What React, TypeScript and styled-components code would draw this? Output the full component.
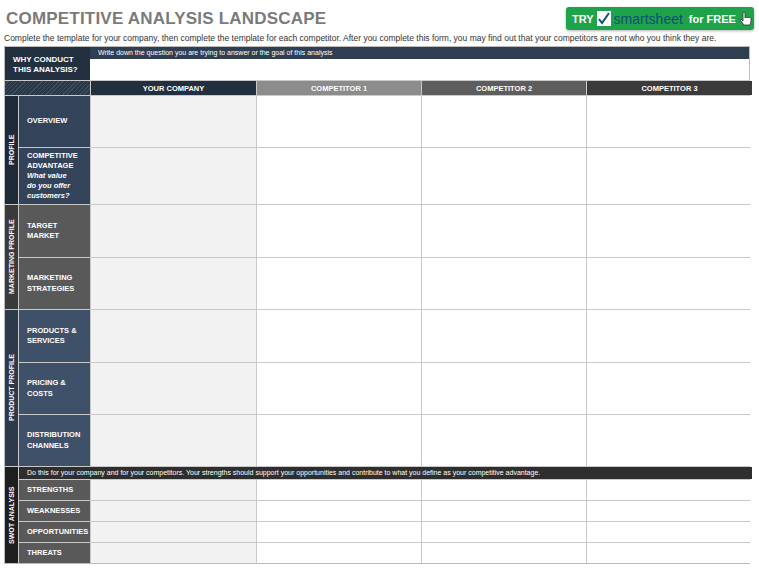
import React from 'react';
import styled, { createGlobalStyle } from 'styled-components';

const Global = createGlobalStyle`
	body { margin: 0; background: #fff; font-family: 'Liberation Sans', Arial, sans-serif; }
`;

const COLS = '71px 165px 164px 164px 165px';

const Page = styled.div`
	width: 759px;
	height: 568px;
	padding: 4px 9px 0 4px;
	box-sizing: border-box;
	display: flex;
	flex-direction: column;
`;

const Top = styled.div`
	display: flex;
	justify-content: space-between;
	align-items: flex-start;
	height: 26px;
`;

const Title = styled.h1`
	margin: 5px 0 0 2px;
	font-size: 17px;
	font-weight: bold;
	color: #7a7a7a;
	letter-spacing: 0.2px;
`;

const Try = styled.div`
	position: relative;
	margin-top: 3px;
	margin-right: -4px;
	width: 188px;
	height: 23px;
	background: #1fa34a;
	border-radius: 3px;
	box-shadow: 0 1px 3px rgba(0, 0, 0, 0.3);
	display: flex;
	align-items: center;
	gap: 3px;
	padding-left: 6px;
	box-sizing: border-box;
	color: #fff;
	font-size: 11px;
	font-weight: bold;
	white-space: nowrap;
	span.brand { color: #0d4f7a; font-size: 14px; font-weight: normal; }
	span.free { margin-left: 3px; }
`;

const Check = styled.div`
	width: 14px;
	height: 15px;
	background: #fff;
	display: flex;
	align-items: center;
	justify-content: center;
`;

const Sub = styled.p`
	margin: 3px 0 3px 0;
	font-size: 8.5px;
	color: #333;
	white-space: nowrap;
`;

const Table = styled.div`
	display: flex;
	flex-direction: column;
	border: 1px solid #bbb;
	background: #c9c9c9;
	gap: 1px;
`;

const WhyRow = styled.div`
	display: grid;
	grid-template-columns: 85px 1fr;
	height: 33px;
`;

const WhyLabel = styled.div`
	background: #222f3e;
	color: #fff;
	font-size: 8px;
	font-weight: bold;
	padding: 8px 0 0 8px;
	line-height: 1.25;
`;

const WhyBody = styled.div`
	background: #fff;
	display: flex;
	flex-direction: column;
`;

const Strip = styled.div<{ $bg: string }>`
	background: ${p => p.$bg};
	color: #fff;
	font-size: 7px;
	height: 12px;
	line-height: 12px;
	padding-left: 8px;
	white-space: nowrap;
	overflow: hidden;
`;

const HeaderRow = styled.div`
	display: grid;
	grid-template-columns: 85px 165px 164px 164px 165px;
	gap: 1px;
	height: 14px;
`;

const Hatch = styled.div`
	background: repeating-linear-gradient(135deg, #2a3746 0 2px, #3e4c5c 2px 3px);
`;

const HeadCell = styled.div<{ $bg: string }>`
	background: ${p => p.$bg};
	color: #fff;
	font-size: 7.5px;
	font-weight: bold;
	display: flex;
	align-items: center;
	justify-content: center;
`;

const Section = styled.div`
	display: flex;
	gap: 1px;
`;

const Side = styled.div<{ $bg: string }>`
	width: 13px;
	background: ${p => p.$bg};
	color: #fff;
	font-size: 7px;
	font-weight: bold;
	writing-mode: vertical-rl;
	transform: rotate(180deg);
	display: flex;
	align-items: center;
	justify-content: center;
	white-space: nowrap;
`;

const Rows = styled.div`
	flex: 1;
	display: flex;
	flex-direction: column;
	gap: 1px;
`;

const Row = styled.div<{ $h: number }>`
	display: grid;
	grid-template-columns: ${COLS};
	gap: 1px;
	height: ${p => p.$h}px;
`;

const Label = styled.div<{ $bg: string }>`
	background: ${p => p.$bg};
	color: #fff;
	font-size: 7.5px;
	font-weight: bold;
	line-height: 1.35;
	padding-left: 8px;
	display: flex;
	flex-direction: column;
	justify-content: center;
`;

const Cell = styled.div<{ $shade?: boolean }>`
	background: ${p => (p.$shade ? '#f2f2f2' : '#fff')};
`;

type RowDef = { label: React.ReactNode; h: number };

function Block({ side, sideBg, labelBg, rows, note }: { side: string; sideBg: string; labelBg: string; rows: RowDef[]; note?: string }) {
	return (
		<Section>
			<Side $bg={sideBg}>{side}</Side>
			<Rows>
				{note && <Strip $bg="#2e2e2e">{note}</Strip>}
				{rows.map((r, i) => (
					<Row key={i} $h={r.h}>
						<Label $bg={labelBg}>{r.label}</Label>
						<Cell $shade />
						<Cell />
						<Cell />
						<Cell />
					</Row>
				))}
			</Rows>
		</Section>
	);
}

export default function App() {
	return (
		<Page>
			<Global />
			<Top>
				<Title>COMPETITIVE ANALYSIS LANDSCAPE</Title>
				<Try>
					TRY
					<Check>
						<svg width="12" height="13" viewBox="0 0 12 13">
							<path d="M1 7 L4 11 L11 1" fill="none" stroke="#0d4f7a" strokeWidth="2" />
						</svg>
					</Check>
					<span className="brand">smartsheet</span>
					<span className="free">for FREE</span>
					<svg width="14" height="16" viewBox="0 0 14 16">
						<path d="M4 2 v8 l-2 -2 c-1 0 -1 1 0 2 l3 4 h6 l1 -4 v-3 c0 -1 -2 -1 -2 0 c0 -1 -2 -1 -2 0 c0 -1 -2 -1 -2 0 v-5 c0 -1 -2 -1 -2 0z" fill="#fff" stroke="#333" strokeWidth="0.8" />
					</svg>
				</Try>
			</Top>
			<Sub>Complete the template for your company, then complete the template for each competitor. After you complete this form, you may find out that your competitors are not who you think they are.</Sub>
			<Table>
				<WhyRow>
					<WhyLabel>WHY CONDUCT<br />THIS ANALYSIS?</WhyLabel>
					<WhyBody>
						<Strip $bg="#2f3e50">Write down the question you are trying to answer or the goal of this analysis</Strip>
					</WhyBody>
				</WhyRow>
				<HeaderRow>
					<Hatch />
					<HeadCell $bg="#222f3e">YOUR COMPANY</HeadCell>
					<HeadCell $bg="#8c8c8c">COMPETITOR 1</HeadCell>
					<HeadCell $bg="#5d5d5d">COMPETITOR 2</HeadCell>
					<HeadCell $bg="#3b3b3b">COMPETITOR 3</HeadCell>
				</HeaderRow>
				<Block
					side="PROFILE"
					sideBg="#1e2a38"
					labelBg="#33445a"
					rows={[
						{ label: 'OVERVIEW', h: 51 },
						{ label: <>COMPETITIVE<br />ADVANTAGE<br /><em>What value<br />do you offer<br />customers?</em></>, h: 56 },
					]}
				/>
				<Block
					side="MARKETING PROFILE"
					sideBg="#3a3a3a"
					labelBg="#595959"
					rows={[
						{ label: <>TARGET<br />MARKET</>, h: 52 },
						{ label: <>MARKETING<br />STRATEGIES</>, h: 51 },
					]}
				/>
				<Block
					side="PRODUCT PROFILE"
					sideBg="#2c3a4c"
					labelBg="#3f5069"
					rows={[
						{ label: <>PRODUCTS &amp;<br />SERVICES</>, h: 52 },
						{ label: <>PRICING &amp;<br />COSTS</>, h: 51 },
						{ label: <>DISTRIBUTION<br />CHANNELS</>, h: 51 },
					]}
				/>
				<Block
					side="SWOT ANALYSIS"
					sideBg="#1e1e1e"
					labelBg="#595959"
					note="Do this for your company and for your competitors. Your strengths should support your opportunities and contribute to what you define as your competitive advantage."
					rows={[
						{ label: 'STRENGTHS', h: 20 },
						{ label: 'WEAKNESSES', h: 20 },
						{ label: 'OPPORTUNITIES', h: 20 },
						{ label: 'THREATS', h: 20 },
					]}
				/>
			</Table>
		</Page>
	);
}
